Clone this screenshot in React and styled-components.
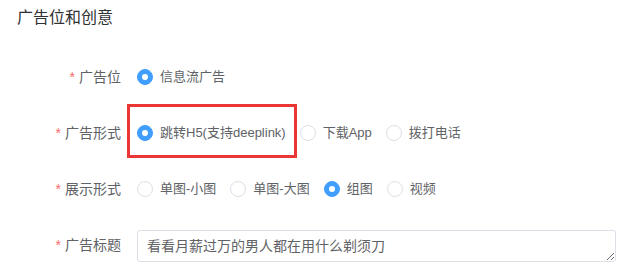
import React, { useState } from 'react'
import styled, { createGlobalStyle } from 'styled-components'

const GlobalStyle = createGlobalStyle`
  html, body {
    margin: 0;
    padding: 0;
    background: #fff;
  }
  body {
    font-family: "Helvetica Neue", "Liberation Sans", "Noto Sans CJK SC", sans-serif;
    -webkit-font-smoothing: antialiased;
  }
`

const Page = styled.div`
  width: 642px;
  height: 278px;
  overflow: hidden;
  background: #fff;
`

const SectionTitle = styled.div`
  padding: 7px 0 0 17px;
  font-size: 16px;
  line-height: 22px;
  color: #303133;
`

const Form = styled.div`
  margin-top: 28px;
`

const FormRow = styled.div`
  display: flex;
  align-items: ${(p) => (p.$top ? 'flex-start' : 'center')};
  height: 40px;
  margin-bottom: 16px;
`

const Label = styled.label`
  width: 137px;
  flex-shrink: 0;
  box-sizing: border-box;
  padding-right: 16px;
  text-align: right;
  font-size: 14px;
  line-height: 40px;
  color: #606266;

  &::before {
    content: '*';
    color: #f56c6c;
    margin-right: 4px;
  }
`

const RadioGroup = styled.div`
  display: flex;
  align-items: center;
`

const RadioItem = styled.label`
  position: relative;
  display: flex;
  align-items: center;
  margin-right: 14px;
  font-size: 13px;
  line-height: 20px;
  color: #606266;
  cursor: pointer;
  white-space: nowrap;

  /* 标注框 */
  ${(p) =>
    p.$marked &&
    `
    &::after {
      content: '';
      position: absolute;
      left: -10px;
      right: -11px;
      top: -19px;
      bottom: -15px;
      border: 3px solid #ec3636;
      pointer-events: none;
    }
  `}
`

const RadioDot = styled.span`
  width: 16px;
  height: 16px;
  box-sizing: border-box;
  border-radius: 50%;
  border: 1px solid ${(p) => (p.$checked ? '#409eff' : '#dcdfe6')};
  background: ${(p) => (p.$checked ? '#409eff' : '#fff')};
  margin-right: 7px;
  display: flex;
  align-items: center;
  justify-content: center;

  &::after {
    content: '';
    width: 6px;
    height: 6px;
    border-radius: 50%;
    background: #fff;
    display: ${(p) => (p.$checked ? 'block' : 'none')};
  }
`

const TitleInput = styled.textarea`
  width: 479px;
  height: 32px;
  margin-top: 5px;
  box-sizing: border-box;
  padding: 5px 9px;
  border: 1px solid #dcdfe6;
  border-radius: 3px;
  font-family: inherit;
  font-size: 14px;
  line-height: 20px;
  color: #606266;
  resize: vertical;
  outline: none;
`

function Radios({ options, value, onChange, marked }) {
  return (
    <RadioGroup>
      {options.map((opt) => (
        <RadioItem
          key={opt}
          $marked={marked === opt}
          onClick={() => onChange(opt)}
        >
          <RadioDot $checked={value === opt} />
          {opt}
        </RadioItem>
      ))}
    </RadioGroup>
  )
}

export default function App() {
  const [position, setPosition] = useState('信息流广告')
  const [adType, setAdType] = useState('跳转H5(支持deeplink)')
  const [display, setDisplay] = useState('组图')
  const [title, setTitle] = useState('看看月薪过万的男人都在用什么剃须刀')

  return (
    <Page>
      <GlobalStyle />
      <SectionTitle>广告位和创意</SectionTitle>
      <Form>
        <FormRow>
          <Label>广告位</Label>
          <Radios
            options={['信息流广告']}
            value={position}
            onChange={setPosition}
          />
        </FormRow>
        <FormRow>
          <Label>广告形式</Label>
          <Radios
            options={['跳转H5(支持deeplink)', '下载App', '拨打电话']}
            value={adType}
            onChange={setAdType}
            marked="跳转H5(支持deeplink)"
          />
        </FormRow>
        <FormRow>
          <Label>展示形式</Label>
          <Radios
            options={['单图-小图', '单图-大图', '组图', '视频']}
            value={display}
            onChange={setDisplay}
          />
        </FormRow>
        <FormRow $top>
          <Label>广告标题</Label>
          <TitleInput
            value={title}
            onChange={(e) => setTitle(e.target.value)}
          />
        </FormRow>
      </Form>
    </Page>
  )
}
